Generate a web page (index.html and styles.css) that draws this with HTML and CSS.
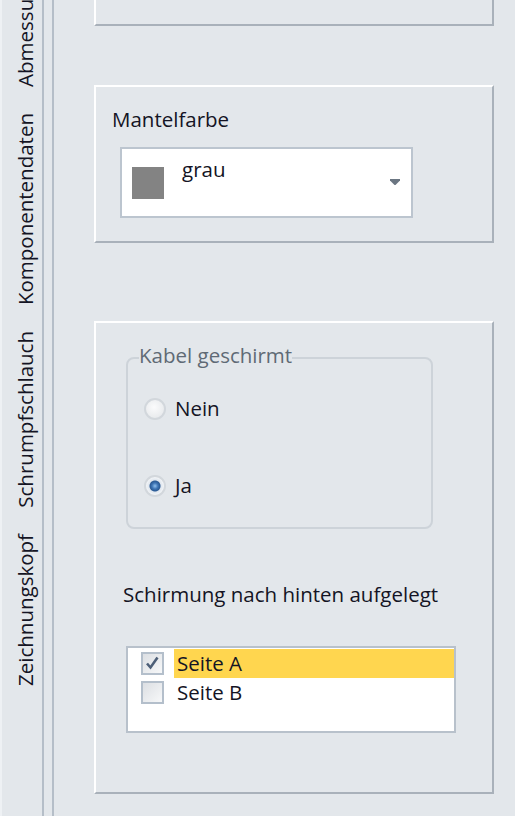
FILE: index.html
```html
<!DOCTYPE html>
<html lang="de">
<head>
  <meta charset="UTF-8">
  <meta name="viewport" content="width=device-width, initial-scale=1.0">
  <link rel="stylesheet" href="styles.css">
  <title>Kabel</title>
</head>
<body>
  <div class="window">
    <div class="tabs">
      <div class="tab">Abmessungen</div>
      <div class="tab">Komponentendaten</div>
      <div class="tab">Schrumpfschlauch</div>
      <div class="tab">Zeichnungskopf</div>
    </div>

    <div class="content">
      <div class="panel panel-top"></div>

      <div class="panel panel-color">
        <div class="label">Mantelfarbe</div>
        <div class="combo">
          <span class="swatch"></span>
          <span class="combo-text">grau</span>
          <svg class="combo-arrow" width="10" height="6" viewBox="0 0 10 6">
            <path d="M0 0H10V1.5L5.5 6H4.5L0 1.5Z" fill="#6b7682"/>
          </svg>
        </div>
      </div>

      <div class="panel panel-shield">
        <fieldset class="group">
          <legend>Kabel geschirmt</legend>
          <label class="radio"><span class="radio-dot"></span>Nein</label>
          <label class="radio"><span class="radio-dot checked"></span>Ja</label>
        </fieldset>

        <div class="label label-shield">Schirmung nach hinten aufgelegt</div>

        <div class="listbox">
          <div class="list-row">
            <span class="check">
              <svg width="19" height="19" viewBox="0 0 19 19">
                <path d="M4 9.5L7.5 13.5L14.5 3.5" fill="none" stroke="#4d5f78" stroke-width="2.6"/>
              </svg>
            </span>
            <span class="list-text selected">Seite A</span>
          </div>
          <div class="list-row">
            <span class="check"></span>
            <span class="list-text">Seite B</span>
          </div>
        </div>
      </div>
    </div>
  </div>
</body>
</html>
```

FILE: styles.css
```css
body {
  margin: 0;
  background-color: #e3e7eb;
  font-family: "Open Sans", "Noto Sans", sans-serif;
  font-size: 20.5px;
  color: #141424;
}

.window {
  display: flex;
  width: 515px;
  height: 816px;
  overflow: hidden;
}

/* vertical tab strip */
.tabs {
  flex-shrink: 0;
  width: 44px;
  box-sizing: border-box;
  border-left: 2px solid #eef1f4;
  border-right: 2px solid #b5bec8;
  padding-left: 10px;
  padding-bottom: 117px;
  display: flex;
  flex-direction: column;
  justify-content: flex-end;
  align-items: flex-start;
  overflow: hidden;
}

.tab {
  flex-shrink: 0;
  writing-mode: vertical-rl;
  transform: rotate(180deg);
  line-height: 27px;
  padding: 13px 0;
  white-space: nowrap;
}

.content {
  flex: 1;
  margin-left: 8px;
  border-left: 2px solid #b5bec8;
  padding-left: 40px;
}

.panel {
  width: 400px;
  box-sizing: border-box;
  border-top: 2px solid #ffffff;
  border-left: 2px solid #ffffff;
  border-right: 2px solid #a9b1ba;
  border-bottom: 2px solid #a9b1ba;
}

.panel-top {
  height: 26px;
  border-top: none;
}

.panel-color {
  margin-top: 59px;
  height: 158px;
  padding-top: 19px;
}

.label {
  line-height: 27px;
  padding-left: 16px;
}

.combo {
  margin-top: 14px;
  margin-left: 24px;
  width: 293px;
  height: 71px;
  box-sizing: border-box;
  border: 2px solid #bcc5cf;
  background-color: #ffffff;
  display: flex;
  align-items: flex-start;
  padding: 0 11px 0 10px;
}

.swatch {
  width: 32px;
  height: 32px;
  margin-top: 18px;
  background-color: #838383;
}

.combo-text {
  line-height: 27px;
  margin-top: 7px;
  margin-left: 18px;
}

.combo-arrow {
  margin-left: auto;
  margin-top: 30px;
}

.panel-shield {
  margin-top: 78px;
  height: 473px;
}

.group {
  margin: 19px 0 0 30px;
  width: 307px;
  box-sizing: border-box;
  border: 2px solid #cdd3d9;
  border-radius: 8px;
  padding: 0 0 28px 11px;
}

.group legend {
  padding: 0 0 5px 0;
  line-height: 27px;
  color: #5f6a75;
}

.radio {
  display: flex;
  align-items: center;
  line-height: 27px;
  margin-top: 21px;
  margin-left: 5px;
}

.radio + .radio {
  margin-top: 50px;
}

.radio-dot {
  width: 22px;
  height: 22px;
  box-sizing: border-box;
  border-radius: 50%;
  border: 2px solid #d2d7dc;
  background: radial-gradient(circle at 45% 40%, #fbfbfc 0, #eceef0 60%, #e2e5e8 100%);
  margin-right: 9px;
}

.radio-dot.checked {
  background: radial-gradient(circle at 50% 50%, #8fc0ee 0, #3d74b4 3px, #2a5a94 5px, #dfe6ee 6px, #f4f6f8 9px);
}

.label-shield {
  margin-top: 52px;
  padding-left: 27px;
}

.listbox {
  margin-top: 38px;
  margin-left: 30px;
  width: 330px;
  height: 87px;
  box-sizing: border-box;
  border: 2px solid #b8c1cb;
  background-color: #ffffff;
  padding-top: 1px;
}

.list-row {
  display: flex;
  align-items: center;
  height: 29px;
}

.check {
  width: 23px;
  height: 23px;
  box-sizing: border-box;
  border: 2px solid #b4bfcb;
  background: linear-gradient(135deg, #dcdfe3, #f7f8f9);
  margin-left: 13px;
  margin-right: 10px;
  display: flex;
}

.list-text {
  flex: 1;
  line-height: 29px;
  padding-left: 3px;
}

.list-text.selected {
  background-color: #ffd64f;
}
```
